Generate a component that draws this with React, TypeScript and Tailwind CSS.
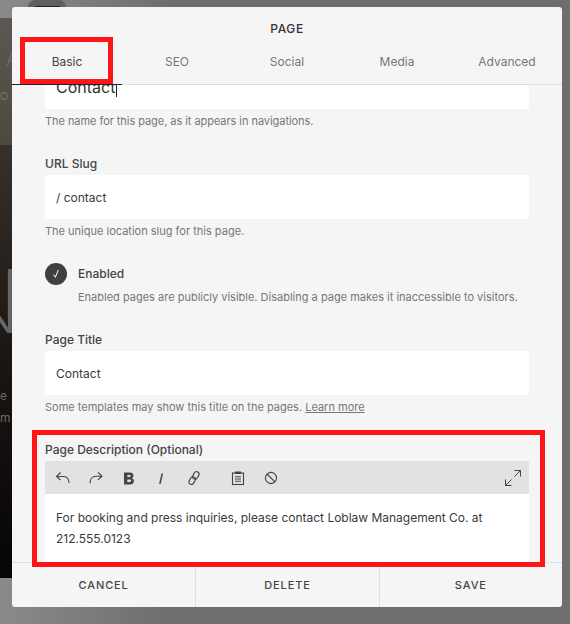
const tabs = ['Basic', 'SEO', 'Social', 'Media', 'Advanced'];

function Field({ label, value, help }: { label: string; value: string; help: React.ReactNode }) {
  return (
    <div className="mb-[26px]">
      <div className="pt-[1px] text-[12px] leading-[16px] font-medium text-[#444] mb-[3px]">{label}</div>
      <div className="h-[44px] bg-white pl-[11px] pt-[2px] flex items-center text-[12px] text-[#3a3a3a]">{value}</div>
      <div className="mt-[4px] text-[11px] leading-[16px] text-[#777]">{help}</div>
    </div>
  );
}

function Tool({ children }: { children: React.ReactNode }) {
  return (
    <svg width="18" height="18" viewBox="0 0 18 18" fill="none" stroke="#444" strokeWidth="1.1">
      {children}
    </svg>
  );
}

export default function App() {
  return (
    <div className="relative w-[570px] h-[624px] overflow-hidden bg-gradient-to-r from-[#8a8a8a] to-[#6e6e6e] to-30% pt-[7px] pl-[12px] font-['Inter',sans-serif]">
      {/* page behind the dialog */}
      <div className="absolute left-0 top-[18px] w-[12px] h-[560px] overflow-hidden flex flex-col">
        <div className="h-[127px] bg-gradient-to-b from-[#5a5850] to-[#4c4941]" />
        <div className="flex-1 bg-gradient-to-b from-[#38302a] via-[#1b1613] to-[#070506]" />
        <div className="absolute left-[6px] top-[32px] text-[18px] leading-[20px] text-[#6c6a62]">A</div>
        <div className="absolute left-0 top-[71px] text-[11px] leading-[14px] tracking-[0.1em] whitespace-nowrap text-[#77756c]">O S</div>
        <div className="absolute right-[-9px] top-[233px] text-[88px] leading-[100px] font-extralight text-[#666]">N</div>
        <div className="absolute left-0 top-[371px] text-[12px] leading-[14px] tracking-[0.2em] whitespace-nowrap text-[#6e6a66]">e s</div>
        <div className="absolute left-0 top-[393px] text-[12px] leading-[14px] tracking-[0.2em] whitespace-nowrap text-[#6e6a66]">m e</div>
      </div>
      <div className="absolute left-[28px] top-0 w-[38px] h-[7px] rounded-t-[12px] bg-[#5f5f5f]">
        <div className="absolute left-[7px] right-[6px] bottom-0 h-px bg-[#222]" />
      </div>

      <div className="relative w-[550px] h-[600px] rounded-[3px] bg-[#f5f5f5] flex flex-col overflow-hidden">
        <div className="h-[78px] shrink-0 border-b border-[#dedede]">
          <div className="pt-[15px] text-center text-[12px] leading-[14px] font-medium tracking-[0.05em] text-[#333]">PAGE</div>
          <div className="grid grid-cols-5 mt-[18px] text-[12px] leading-[16px] text-[#777]">
            {tabs.map((t, i) => (
              <div key={t} className={`text-center ${i === 0 ? 'text-[#444]' : ''}`}>{t}</div>
            ))}
          </div>
        </div>

        <div className="flex-1 overflow-hidden px-[33px]">
          <div className="-mt-[20px]">
            <div className="mb-[26px]">
              <div className="h-[44px] bg-white pl-[11px] flex items-center text-[16px] text-[#333]">Contact</div>
              <div className="mt-[4px] text-[11px] leading-[16px] tracking-[-0.005em] text-[#777]">The name for this page, as it appears in navigations.</div>
            </div>
            <div className="-mb-[2px]">
              <Field label="URL Slug" value="/ contact" help="The unique location slug for this page." />
            </div>

            <div className="flex gap-[11px] mb-[26px]">
              <div className="w-[22px] h-[22px] rounded-full bg-[#3f3f3f] flex items-center justify-center shrink-0">
                <svg width="10" height="10" viewBox="0 0 10 10" fill="none" stroke="#fff" strokeWidth="1">
                  <path d="M2.6 5.6l1.7 2.7L7.400 .9" />
                </svg>
              </div>
              <div className="pt-[3px]">
                <div className="text-[12px] leading-[16px] font-medium text-[#444]">Enabled</div>
                <div className="mt-[7px] text-[11px] leading-[16px] text-[#777]">Enabled pages are publicly visible. Disabling a page makes it inaccessible to visitors.</div>
              </div>
            </div>

            <Field
              label="Page Title"
              value="Contact"
              help={<>Some templates may show this title on the pages. <span className="underline">Learn more</span></>}
            />

            <div className="pt-[1px] text-[12px] leading-[16px] font-medium text-[#444] mb-[3px]">Page Description (Optional)</div>
            <div className="h-[33px] bg-[#e2e2e2] flex items-center pl-[9px] pr-[7px]">
              <div className="flex items-center gap-[14.8px]">
                <Tool><path d="M6.500 3.500L2.500 7.500 6.500 11M2.500 7.500h7.500c3 0 5 2.500 5 6.500" /></Tool>
                <Tool><path d="M11 3.500l4 3.700-4 3.700M15 7.200H9c-3.500 0-6 2.800-6 7" /></Tool>
                <Tool>
                  <path
                    fillRule="evenodd"
                    stroke="none"
                    fill="#444"
                    d="M4 3.500h6c4 0 4.500 4.800 1.800 5.700 3.200.8 2.800 6.300-1.600 6.300H4zM7.300 6v2h2.400c1.200 0 1.200-2 0-2zM7.300 10.500V13h2.800c1.400 0 1.400-2.500 0-2.500z"
                  />
                </Tool>
                <Tool><path d="M10.300 4.500L7.800 15" strokeWidth="1.500" /></Tool>
                <Tool>
                  <rect x="8.300" y="2.400" width="5" height="8" rx="2.500" transform="rotate(30 10.800 6.400)" />
                  <rect x="4.700" y="7.600" width="5" height="8" rx="2.500" transform="rotate(30 7.200 11.600)" />
                </Tool>
                <span className="ml-[-4px] pl-[15px] flex">
                  <Tool>
                    <rect x="3.500" y="4" width="11" height="11.500" />
                    <rect x="6" y="2.500" width="6" height="2.500" fill="#444" stroke="none" />
                    <path d="M6 7.800h6M6 10h6M6 12.300h6" />
                  </Tool>
                </span>
                <Tool><circle cx="9" cy="9" r="5.600" /><path d="M5 5l8 8" /></Tool>
              </div>
              <svg className="ml-auto" width="18" height="18" viewBox="0 0 18 18" fill="none" stroke="#444" strokeWidth="1">
                <path d="M10.500 1.500h6v6M16.500 1.500L10.500 7.500M7.500 10.500L1.500 16.500M1.500 10.500v6h6" />
              </svg>
            </div>
            <div className="bg-white h-[80px] pl-[11px] pr-[12px] pt-[13px] text-[12px] leading-[21px] tracking-[-0.001em] text-[#3a3a3a]">
              For booking and press inquiries, please contact Loblaw Management Co. at 212.555.0123
            </div>
          </div>
        </div>

        <div className="h-[45px] shrink-0 border-t border-[#dedede] grid grid-cols-3 text-[11px] font-medium tracking-[0.08em] text-[#444]">
          <div className="flex items-center justify-center">CANCEL</div>
          <div className="flex items-center justify-center border-l border-[#dedede]">DELETE</div>
          <div className="flex items-center justify-center border-l border-[#dedede]">SAVE</div>
        </div>

        {/* black rule and caret */}
        <div className="absolute left-0 top-[77px] w-[110px] h-px bg-[#222]" />
        <div className="absolute left-[104px] top-[77px] w-px h-[13px] bg-[#222]" />
      </div>

      {/* red annotation boxes */}
      <div className="absolute left-[20px] top-[37px] w-[93px] h-[47px] border-[5px] border-[#ff1418]" />
      <div className="absolute left-[32px] top-[430px] w-[513px] h-[137px] border-[5px] border-[#ff1418]" />
    </div>
  );
}
